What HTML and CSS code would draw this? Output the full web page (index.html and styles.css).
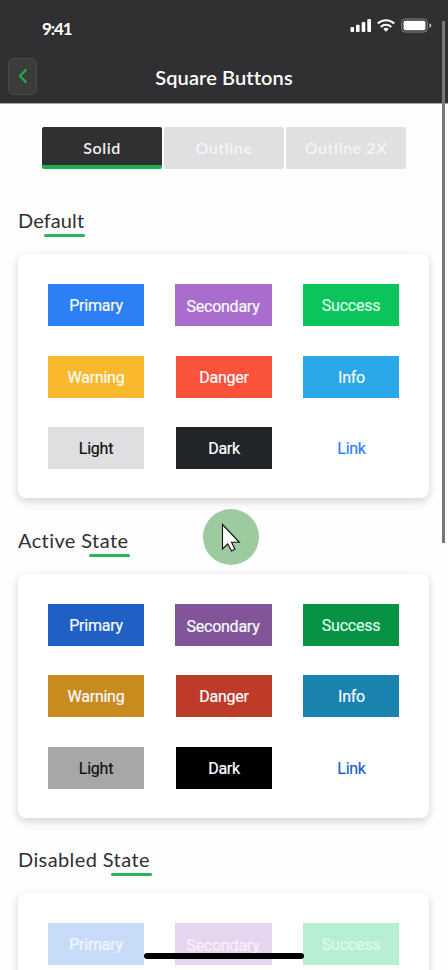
FILE: index.html
```
<!DOCTYPE html>
<html lang="en">
<head>
<meta charset="utf-8">
<title>Square Buttons</title>
<link rel="stylesheet" href="styles.css">
</head>
<body>
<div class="screen">
  <header class="header">
    <div class="status">
      <span class="time">9:41</span>
      <svg class="status-icons" width="82" height="16" viewBox="0 0 82 16">
        <g fill="#fff">
          <rect x="0.5" y="9" width="3.6" height="5" rx="1"/>
          <rect x="6" y="6.7" width="3.6" height="7.3" rx="1"/>
          <rect x="11.7" y="4" width="3.6" height="10" rx="1"/>
          <rect x="17.3" y="1" width="3.7" height="13" rx="1"/>
          <path d="M36 13.8 33.3 11a3.9 3.9 0 0 1 5.4 0z"/>
          <rect x="53.5" y="2.8" width="22" height="9.4" rx="1.7"/>
          <path d="M79.5 5.2c2.3.8 2.3 3.800 0 4.600z" opacity=".75"/>
        </g>
        <g fill="none" stroke="#fff" stroke-width="2.100">
          <path d="M27.800 5.500a11.900 11.900 0 0 1 16.400 0"/>
          <path d="M30.800 8.900a7.500 7.500 0 0 1 10.400 0"/>
        </g>
        <rect x="51.700" y="1" width="25.600" height="13" rx="3.500" fill="none" stroke="#858586"/>
      </svg>
    </div>
    <div class="bar">
      <button class="back" aria-label="Back">
        <svg width="10" height="16" viewBox="0 0 10 16"><path d="M8.500 1.200 2 8l6.500 6.800" fill="none" stroke="#20ad55" stroke-width="2.200"/></svg>
      </button>
      <h1>Square Buttons</h1>
    </div>
  </header>
  <nav class="tabs">
    <span class="tab selected">Solid</span>
    <span class="tab">Outline</span>
    <span class="tab">Outline 2X</span>
  </nav>
  <section>
    <h2 class="t-default">Default</h2>
    <div class="card">
      <span class="btn primary">Primary</span><span class="btn secondary">Secondary</span><span class="btn success">Success</span>
      <span class="btn warning">Warning</span><span class="btn danger">Danger</span><span class="btn info">Info</span>
      <span class="btn light">Light</span><span class="btn dark">Dark</span><span class="btn link">Link</span>
    </div>
  </section>
  <section class="active">
    <h2 class="t-active">Active State</h2>
    <div class="card">
      <span class="btn primary">Primary</span><span class="btn secondary">Secondary</span><span class="btn success">Success</span>
      <span class="btn warning">Warning</span><span class="btn danger">Danger</span><span class="btn info">Info</span>
      <span class="btn light">Light</span><span class="btn dark">Dark</span><span class="btn link">Link</span>
    </div>
  </section>
  <section class="disabled">
    <h2 class="t-disabled">Disabled State</h2>
    <div class="card">
      <span class="btn primary">Primary</span><span class="btn secondary">Secondary</span><span class="btn success">Success</span>
    </div>
  </section>
  <div class="pointer">
    <svg width="56" height="56" viewBox="0 0 56 56"><path d="M19.500 15.500v24.500l5.200-5 3.800 7 3.500-1.700-3.500-7h7.800z" fill="#fff" stroke="#111" stroke-width="1.100"/></svg>
  </div>
  <div class="scrollbar"></div>
  <div class="home"></div>
</div>
</body>
</html>
```
FILE: styles.css
```
* { box-sizing: border-box; }
body { margin: 0; background: #fefefe; }
.screen {
  position: relative;
  width: 448px;
  height: 970px;
  overflow: hidden;
  background: #fefefe;
  font-family: Lato, sans-serif;
}
.header {
  height: 104px;
  background: #303032;
  color: #fff;
  border-bottom: 1px solid #a3a3a5;
}
.status {
  display: flex;
  justify-content: space-between;
  align-items: flex-start;
  height: 56px;
  padding: 18px 16px 0 42px;
}
.time { font-size: 17px; line-height: 22px; font-weight: 700; letter-spacing: -1.1px; }
.bar {
  display: grid;
  grid-template-columns: 30px 1fr 30px;
  align-items: center;
  height: 40px;
  padding: 0 8px;
}
.back {
  display: flex;
  align-items: center;
  justify-content: center;
  width: 29px;
  height: 37px;
  padding: 0;
  border: 1px solid #494a48;
  border-radius: 6px;
  background: #3c3c3b;
}
h1 {
  margin: 1px 0 0;
  text-align: center;
  font-size: 20px;
  line-height: 24px;
  font-weight: 600;
  letter-spacing: 0.1px;
}
.tabs {
  display: flex;
  gap: 2px;
  padding: 23px 42px 0;
}
.tab {
  width: 120px;
  height: 42px;
  border-radius: 2px;
  background: #e0e0e2;
  color: #f5f5f5;
  text-align: center;
  font: 600 16px/42px Lato, sans-serif;
  letter-spacing: 0.6px;
}
.tab.selected {
  background: #303032;
  color: #f2f2f2;
  border-bottom: 4px solid #20ad50;
}
section { height: 319.600px; padding: 0 19px 0 18px; }
.tabs + section { margin-top: 39px; }
h2 {
  display: flex;
  flex-direction: column;
  width: fit-content;
  height: 46px;
  margin: 0;
  font: 400 20px/24px Lato, sans-serif;
  color: #303032;
  white-space: nowrap;
}
h2::after {
  content: "";
  width: 41px;
  height: 3px;
  margin-top: 2px;
  border-radius: 2px;
  background: #27b45c;
  align-self: flex-end;
}
.t-default { width: 67px; letter-spacing: 0.1px; }
.t-active { width: 112px; letter-spacing: 0.4px; }
.t-disabled { width: 134px; letter-spacing: 0.4px; }
.card {
  display: grid;
  grid-template-columns: repeat(3, 96px);
  grid-auto-rows: 42px;
  justify-content: space-between;
  align-content: start;
  row-gap: 29.500px;
  height: 244px;
  padding: 30px;
  border-radius: 8px;
  background: #fff;
  box-shadow: 0 4px 8px rgba(0, 0, 0, 0.14), 0 0 12px rgba(0, 0, 30, 0.04);
}
.btn {
  color: #f5fbff;
  text-align: center;
  font: 400 16px/43px Roboto, sans-serif;
  letter-spacing: -0.250px;
  -webkit-text-stroke: 0.2px currentColor;
  white-space: nowrap;
}
.primary { background: #2d7ff6; }
.secondary { margin-left: -1px; line-height: 45px; background: #ab6dcd; }
.success { background: #0bc45c; color: #d9ffe8; }
.warning { background: #fab82c; }
.danger { background: #fb533b; }
.info { background: #29a7e8; }
.danger, .info, .dark, .link { text-indent: 1px; }
.light { background: #dfdfe1; color: #111; }
.dark { background: #1f2529; color: #fff; }
.link { color: #2d7ff6; }
.active .primary { background: #205fc4; }
.active .secondary { background: #825598; }
.active .success { background: #079246; }
.active .warning { background: #c98a1e; }
.active .danger { background: #bf3b29; }
.active .info { background: #1a82ae; }
.active .light { background: #a7a7a7; }
.active .dark { background: #000; }
.active .link { color: #205fc4; }
.disabled .primary { background: #c8dcfa; color: #eef7fe; }
.disabled .secondary { background: #e7d5ef; color: #f8f0fb; }
.disabled .success { background: #b6efd1; color: #dffbea; }
.pointer {
  position: absolute;
  left: 203px;
  top: 509px;
  width: 56px;
  height: 56px;
  border-radius: 50%;
  background: #9dca9e;
}
.scrollbar {
  position: absolute;
  right: 3px;
  top: 21px;
  width: 3px;
  height: 522px;
  background: #777;
}
.home {
  position: absolute;
  left: 144px;
  top: 953px;
  width: 160px;
  height: 6px;
  border-radius: 3px;
  background: #000;
}
```
